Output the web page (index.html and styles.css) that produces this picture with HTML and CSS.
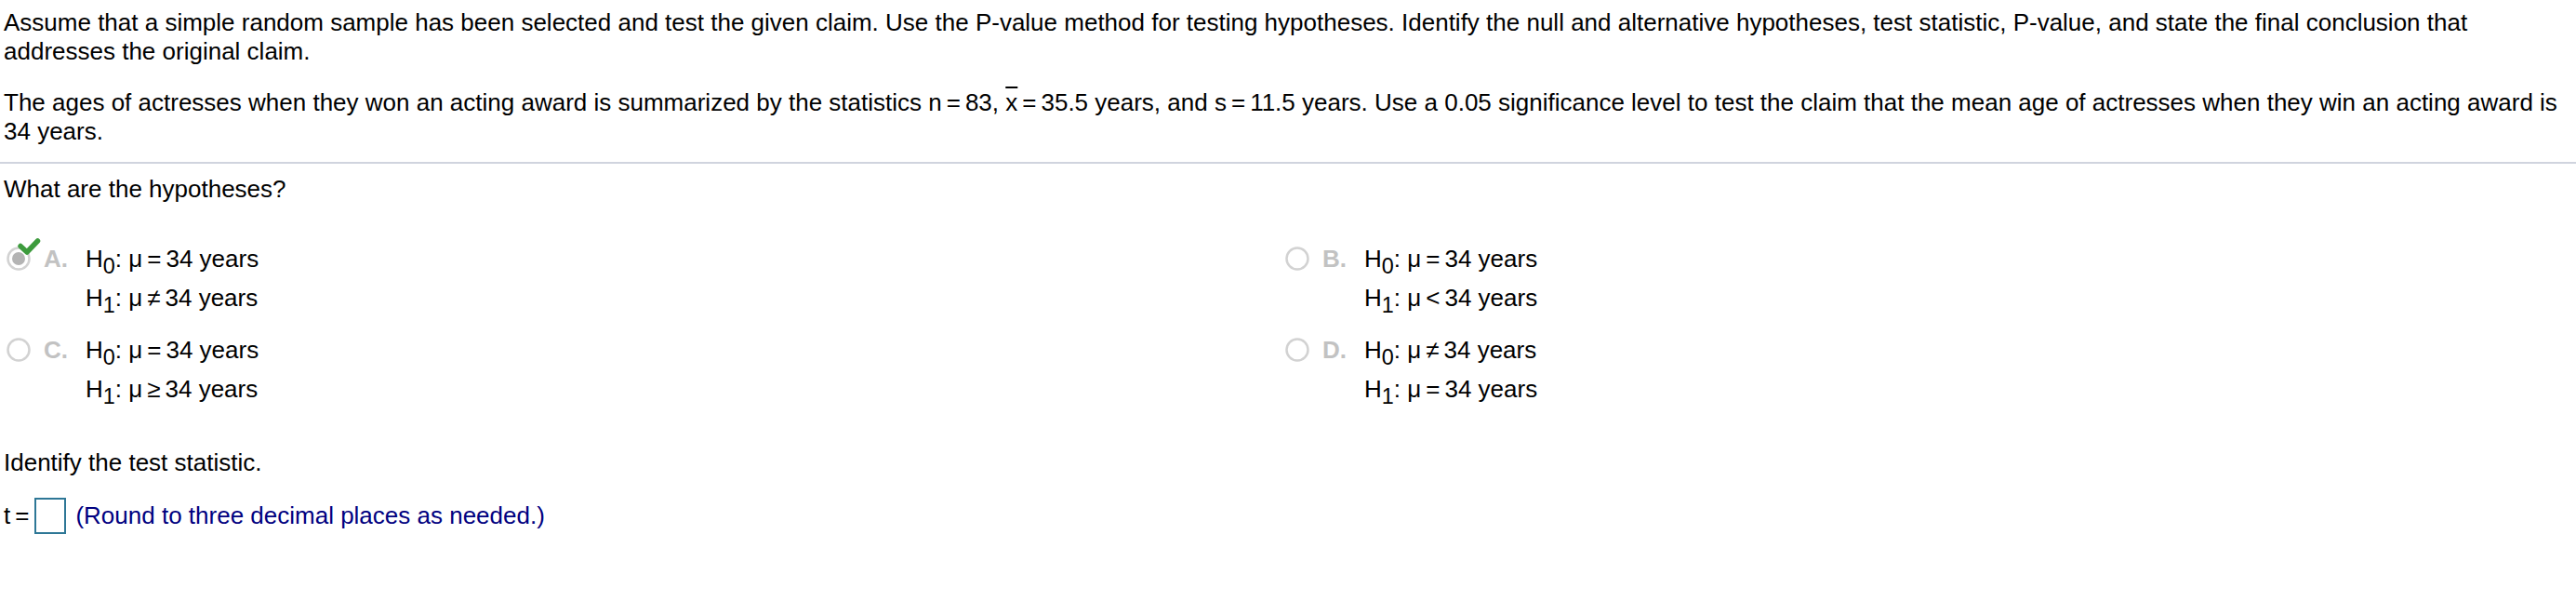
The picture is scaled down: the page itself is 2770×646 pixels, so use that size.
FILE: index.html
```html
<!DOCTYPE html>
<html lang="en">
<head>
<meta charset="utf-8">
<title>Hypothesis test</title>
<link rel="stylesheet" href="styles.css">
</head>
<body>
<div class="page">
  <p class="intro">Assume that a simple random sample has been selected and test the given claim. Use the P-value method for testing hypotheses. Identify the null and alternative hypotheses, test statistic, P-value, and state the final conclusion that addresses the original claim.</p>
  <p class="intro second">The ages of actresses when they won an acting award is summarized by the statistics n<span class="op">=</span>83, <span class="xbar">x</span><span class="op">=</span>35.5 years, and s<span class="op">=</span>11.5 years. Use a 0.05 significance level to test the claim that the mean age of actresses when they win an acting award is 34 years.</p>
  <hr class="rule">
  <p class="question">What are the hypotheses?</p>
  <div class="options">
    <div class="option">
      <span class="radio selected">
        <svg class="ring" width="26" height="26" viewBox="0 0 26 26"><circle cx="13" cy="13" r="11.5" fill="#fff" stroke="#d2d2d2" stroke-width="2.5"/><circle cx="13" cy="13" r="7" fill="#b4b4b4"/></svg>
        <svg class="check" width="26" height="20" viewBox="0 0 26 20"><path d="M4 8.5 L11 15 L22.5 3" fill="none" stroke="#3d9b3d" stroke-width="5.5" stroke-linecap="round" stroke-linejoin="round"/></svg>
      </span>
      <span class="letter">A.</span>
      <div class="hyp">
        <div>H<sub>0</sub>: μ<span class="op">=</span>34 years</div>
        <div>H<sub>1</sub>: μ<span class="op">≠</span>34 years</div>
      </div>
    </div>
    <div class="option">
      <span class="radio">
        <svg class="ring" width="26" height="26" viewBox="0 0 26 26"><circle cx="13" cy="13" r="11.5" fill="#fff" stroke="#d2d2d2" stroke-width="2.5"/></svg>
      </span>
      <span class="letter">B.</span>
      <div class="hyp">
        <div>H<sub>0</sub>: μ<span class="op">=</span>34 years</div>
        <div>H<sub>1</sub>: μ<span class="op">&lt;</span>34 years</div>
      </div>
    </div>
    <div class="option">
      <span class="radio">
        <svg class="ring" width="26" height="26" viewBox="0 0 26 26"><circle cx="13" cy="13" r="11.5" fill="#fff" stroke="#d2d2d2" stroke-width="2.5"/></svg>
      </span>
      <span class="letter">C.</span>
      <div class="hyp">
        <div>H<sub>0</sub>: μ<span class="op">=</span>34 years</div>
        <div>H<sub>1</sub>: μ<span class="op">≥</span>34 years</div>
      </div>
    </div>
    <div class="option">
      <span class="radio">
        <svg class="ring" width="26" height="26" viewBox="0 0 26 26"><circle cx="13" cy="13" r="11.5" fill="#fff" stroke="#d2d2d2" stroke-width="2.5"/></svg>
      </span>
      <span class="letter">D.</span>
      <div class="hyp">
        <div>H<sub>0</sub>: μ<span class="op">≠</span>34 years</div>
        <div>H<sub>1</sub>: μ<span class="op">=</span>34 years</div>
      </div>
    </div>
  </div>
  <p class="question identify">Identify the test statistic.</p>
  <div class="answer">
    <span class="label">t<span class="op">=</span></span>
    <span class="box"></span>
    <span class="hint">(Round to three decimal places as needed.)</span>
  </div>
</div>
</body>
</html>
```

FILE: styles.css
```css
html, body {
  margin: 0;
  padding: 0;
  background: #ffffff;
}

body {
  font-family: "Liberation Sans", Arial, sans-serif;
  font-size: 26px;
  color: #000000;
}

.page {
  padding: 9px 4px 0 4px;
}

.intro {
  margin: 0;
  line-height: 31px;
}

.intro.second {
  margin-top: 24px;
}

.xbar {
  text-decoration: overline;
}

.op {
  margin: 0 5px;
}

.rule {
  margin: 17px -4px 0 -4px;
  border: 0;
  height: 2px;
  background: #d0d4de;
}

.question {
  margin: 12px 0 0 0;
  line-height: 31px;
}

.options {
  display: grid;
  grid-template-columns: 1375px 1fr;
  row-gap: 14px;
  margin-top: 38px;
}

.option {
  display: flex;
  align-items: flex-start;
  padding-left: 3px;
}

.radio {
  position: relative;
  width: 26px;
  height: 26px;
  margin-top: 8px;
  flex: none;
}

.radio .ring {
  display: block;
}

.radio .check {
  position: absolute;
  left: 11px;
  top: -9px;
}

.letter {
  width: 45px;
  margin-left: 14px;
  font-weight: bold;
  color: #c2c2c2;
  line-height: 42px;
  flex: none;
}

.hyp {
  line-height: 42px;
}

.hyp sub {
  font-size: 0.9em;
  vertical-align: -0.3em;
  line-height: 0;
}

.identify {
  margin-top: 43px;
}

.answer {
  display: flex;
  align-items: center;
  margin-top: 22px;
  height: 39px;
}

.label .op {
  margin-right: 0;
}

.label {
  margin-right: 6px;
}

.box {
  width: 30px;
  height: 35px;
  border: 2px solid #2e7796;
  background: #ffffff;
  margin-right: 10px;
}

.hint {
  color: #000080;
}
```
